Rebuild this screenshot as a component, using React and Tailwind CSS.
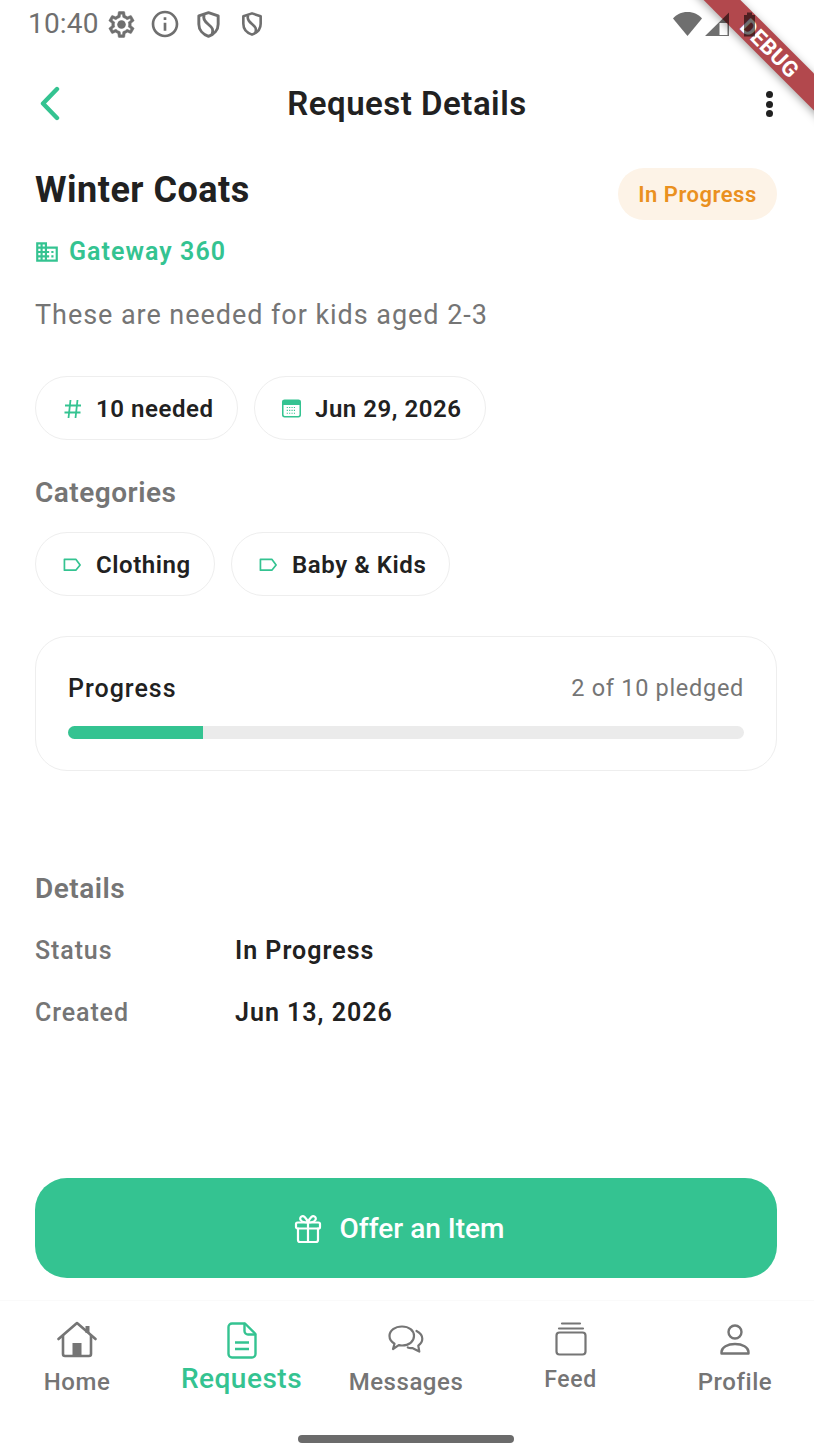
import React from "react";
import { MdInfoOutline, MdBusiness } from "react-icons/md";

const Gear = () => (
  <svg width="31" height="31" viewBox="0 0 24 24" fill="#6f6f6f" stroke="#6f6f6f" strokeWidth="0.4">
    <path d="M19.430 12.980c.04-.32.07-.64.07-.98 0-.34-.03-.66-.07-.98l2.110-1.650c.19-.15.24-.42.12-.64l-2-3.460c-.09-.16-.26-.25-.44-.25-.06 0-.12.01-.17.03l-2.490 1c-.52-.4-1.080-.73-1.690-.98l-.38-2.650C14.460 2.180 14.250 2 14 2h-4c-.25 0-.46.18-.49.42l-.38 2.650c-.61.25-1.170.59-1.690.98l-2.490-1c-.06-.02-.12-.03-.18-.03-.17 0-.34.09-.43.25l-2 3.460c-.13.22-.07.49.12.64l2.110 1.650c-.04.32-.07.65-.07.98 0 .33.03.66.07.98l-2.110 1.650c-.19.15-.24.42-.12.64l2 3.460c.09.16.26.25.44.25.06 0 .12-.01.17-.03l2.490-1c.52.4 1.080.73 1.690.98l.38 2.650c.03.24.24.42.49.42h4c.25 0 .46-.18.49-.42l.38-2.650c.61-.25 1.170-.59 1.690-.98l2.490 1c.06.02.12.03.18.03.17 0 .34-.09.43-.25l2-3.460c.12-.22.07-.49-.12-.64l-2.110-1.650zm-1.980-1.710c.04.31.05.52.05.73 0 .21-.02.43-.05.73l-.14 1.130.89.7 1.080.84-.7 1.210-1.270-.51-1.040-.42-.9.68c-.43.32-.84.56-1.250.73l-1.060.43-.16 1.130-.2 1.350h-1.400l-.19-1.350-.16-1.130-1.060-.43c-.43-.18-.83-.41-1.230-.71l-.91-.7-1.060.43-1.270.51-.7-1.210 1.080-.84.89-.7-.14-1.130c-.03-.31-.05-.54-.05-.74s.02-.43.05-.73l.14-1.130-.89-.7-1.080-.84.7-1.210 1.270.51 1.040.42.9-.68c.43-.32.84-.56 1.250-.73l1.060-.43.16-1.130.2-1.350h1.390l.19 1.350.16 1.130 1.060.43c.43.18.83.41 1.230.71l.91.7 1.060-.43 1.270-.51.7 1.210-1.070.85-.89.7.14 1.130z" />
    <circle cx="12" cy="12" r="3.300" stroke="none" />
  </svg>
);

const Shield = ({ s }) => (
  <svg width={s} height={s} viewBox="0 0 24 24" fill="none" stroke="#6f6f6f" strokeWidth="2.4" strokeLinejoin="round">
    <path d="M12 2.200 4 4.800v7c0 4.600 3.300 8.400 8 10 4.700-1.600 8-5.400 8-10v-7L12 2.200Z" />
    <path d="M8.500 4c-1.500 3 .5 5.500 3.500 8s4.500 4 3 8.500" strokeWidth="2.400" />
  </svg>
);

const Chip = ({ icon, children, w }) => (
  <div className={`h-[64px] pt-[1px] rounded-full border border-[#eeeeee] flex items-center pl-[27px] ${w}`}>
    <span className="w-[19px] flex justify-center shrink-0">{icon}</span>
    <span className="ml-[14px] text-[24px] font-semibold text-[#212121] tracking-[0.55px] whitespace-nowrap">{children}</span>
  </div>
);

const Tag = () => (
  <svg width="20" height="16" viewBox="0 0 20 16" fill="none" stroke="#34c391" strokeWidth="1.8" strokeLinejoin="round">
    <path d="M1.500 2h12l4.500 6-4.500 5.500h-12Z" />
  </svg>
);

const Nav = ({ icon, label, active, top, labelTop, small }) => (
  <div className="w-[120px] flex flex-col items-center">
    <div className={`h-[38px] flex items-center justify-center ${top}`}>{icon}</div>
    <span className={`${labelTop} whitespace-nowrap font-medium ${active ? "text-[28px] leading-[32px] text-[#34c391] tracking-[0.5px]" : small ? "text-[23px] leading-[28px] text-[#757575] tracking-[0.6px]" : "text-[24px] leading-[30px] text-[#757575] tracking-[0.55px]"}`}>{label}</span>
  </div>
);

export default function App() {
  return (
    <div className="relative w-[814px] h-[1455px] bg-white overflow-hidden" style={{ fontFamily: "Roboto, sans-serif" }}>
      {/* status bar */}
      <div className="relative z-20 h-[48px] flex items-center pl-[28px] pr-[54px] text-[#6f6f6f]">
        <span className="text-[28px] leading-[48px] w-[78px] tracking-[0.2px]">10:40</span>
        <Gear />
        <MdInfoOutline size={32} color="#6f6f6f" className="ml-[12px]" />
        <span className="ml-[13px]"><Shield s={29} /></span>
        <span className="ml-[16px]"><Shield s={26} /></span>
        <div className="flex-1" />
        <svg width="88" height="26" viewBox="0 0 88 26" fill="#000" fillOpacity="0.565">
          <path d="M1 7.500C4.500 3.500 9 1 15.500 1S26.500 3.500 30 7.500L15.500 25Z" />
          <path fillRule="evenodd" d="M33 25 57 1.500V25ZM47.500 12v12h8V12Z" />
          <path d="M72 4h3V1.500h5V4h3v21.500H72Z" />
        </svg>
      </div>

      {/* app bar */}
      <div className="h-[112px] relative flex items-center justify-center pb-[1px]">
        <svg className="absolute left-[35px] top-[37px]" width="30" height="36" viewBox="0 0 30 36" fill="none" stroke="#34c391" strokeWidth="4.400" strokeLinecap="round" strokeLinejoin="round">
          <path d="M22 4 8 18.500 22 33" />
        </svg>
        <span className="text-[33px] font-semibold text-[#212121] tracking-[0.5px]">Request Details</span>
        <div className="absolute left-[766px] top-[43px] flex flex-col gap-[2.500px]">
          <span className="w-[7px] h-[7px] rounded-full bg-[#212121]" />
          <span className="w-[7px] h-[7px] rounded-full bg-[#212121]" />
          <span className="w-[7px] h-[7px] rounded-full bg-[#212121]" />
        </div>
      </div>

      {/* body */}
      <div className="pl-[35px] pr-[37px]">
        <div className="flex justify-between items-start">
          <h1 className="text-[36px] leading-[58px] mt-[1px] font-bold text-[#212121] tracking-[0.5px]">Winter Coats</h1>
          <div className="mt-[8px] w-[159px] h-[52px] rounded-full bg-[#fdf3e7] flex items-center justify-center text-[22px] font-semibold text-[#ea9020] tracking-[0.5px]">In Progress</div>
        </div>
        <div className="mt-[14px] h-[36px] flex items-center">
          <MdBusiness size={26} color="#34c391" className="-ml-[1px]" />
          <span className="ml-[9px] text-[25px] font-semibold text-[#34c391] tracking-[1.05px]">Gateway 360</span>
        </div>
        <p className="mt-[26px] h-[38px] leading-[38px] text-[27px] text-[#757575] tracking-[0.95px]">These are needed for kids aged 2-3</p>

        <div className="mt-[42px] flex gap-[16px]">
          <Chip w="w-[203px]" icon={
            <svg width="18" height="20" viewBox="0 0 18 20" fill="none" stroke="#34c391" strokeWidth="1.800">
              <path d="M6.500 1 4.500 19M13.500 1l-2 18M1 6.500h16M0.500 13.500h16" />
            </svg>
          }>10 needed</Chip>
          <Chip w="w-[232px]" icon={
            <svg width="20" height="19" viewBox="0 0 20 19">
              <rect x="0.800" y="0.800" width="18.400" height="17.400" rx="2" fill="#fff" stroke="#34c391" strokeWidth="1.600" />
              <rect x="0.800" y="0.800" width="18.400" height="5" fill="#34c391" />
              <path d="M5 8.500h10M5 11.500h10M5 14.500h10" stroke="#34c391" strokeWidth="1.200" strokeDasharray="1.200 1.300" />
            </svg>
          }>Jun 29, 2026</Chip>
        </div>

        <h2 className="mt-[35px] h-[36px] leading-[36px] text-[28px] font-semibold text-[#757575] tracking-[0.5px]">Categories</h2>
        <div className="mt-[21px] flex gap-[16px]">
          <Chip w="w-[180px]" icon={<Tag />}>Clothing</Chip>
          <Chip w="w-[219px]" icon={<Tag />}>Baby &amp; Kids</Chip>
        </div>

        <div className="mt-[40px] h-[135px] rounded-[32px] border border-[#eeeeee] px-[32px] pt-[34px]">
          <div className="flex justify-between items-center h-[36px]">
            <span className="text-[25px] font-medium text-[#212121] tracking-[1px]">Progress</span>
            <span className="text-[23.500px] text-[#757575] tracking-[0.7px]">2 of 10 pledged</span>
          </div>
          <div className="mt-[19px] h-[13px] rounded-full bg-[#ebebeb] overflow-hidden">
            <div className="h-full w-[20%] bg-[#34c391]" />
          </div>
        </div>

        <h2 className="mt-[100px] h-[36px] leading-[36px] text-[28px] font-semibold text-[#757575] tracking-[0.5px]">Details</h2>
        <div className="mt-[26px] h-[36px] flex items-center">
          <span className="w-[200px] text-[25px] font-medium text-[#757575] tracking-[0.9px]">Status</span>
          <span className="text-[25px] font-semibold text-[#212121] tracking-[1px]">In Progress</span>
        </div>
        <div className="mt-[26px] h-[36px] flex items-center">
          <span className="w-[200px] text-[25px] font-medium text-[#757575] tracking-[0.9px]">Created</span>
          <span className="text-[25px] font-semibold text-[#212121] tracking-[1px]">Jun 13, 2026</span>
        </div>

        <button className="mt-[147px] w-[742px] h-[100px] pr-[14px] pt-[1px] rounded-[32px] bg-[#34c391] flex items-center justify-center text-white">
          <svg width="28" height="30" viewBox="0 0 28 30" fill="none" stroke="#fff" strokeWidth="2.200" strokeLinecap="round" strokeLinejoin="round">
            <rect x="2" y="8.500" width="24" height="6" rx="1.500" />
            <path d="M4 14.500v11.500a2 2 0 0 0 2 2h16a2 2 0 0 0 2-2V14.500M14 8.500V28M14 8.500C12 3 9.500 1.500 7.500 2.500 5 3.800 5.500 8.500 14 8.500ZM14 8.500C16 3 18.500 1.500 20.500 2.500 23 3.800 22.500 8.500 14 8.500Z" />
          </svg>
          <span className="ml-[18px] text-[28px] font-medium">Offer an Item</span>
        </button>
      </div>

      {/* bottom nav */}
      <div className="absolute left-0 right-0 top-[1300px] h-[155px] border-t border-[#fafafa] flex justify-between pl-[17px] pr-[19px]">
        <Nav top="mt-[19px]" labelTop="mt-[9px]" label="Home" icon={
          <svg width="40" height="37" viewBox="0 0 40 37" fill="none" stroke="#757575" strokeWidth="2.600" strokeLinejoin="round" strokeLinecap="round">
            <path d="M1.500 18 20 2 38.500 18" />
            <path d="M6 14.500V33a2 2 0 0 0 2 2h24a2 2 0 0 0 2-2V14.500" />
            <path d="M30.500 5v7" strokeWidth="4" strokeLinecap="butt" />
            <rect x="15.500" y="22" width="9" height="13" fill="#757575" stroke="none" />
          </svg>
        } />
        <Nav active top="mt-[20px]" labelTop="mt-[4px]" label="Requests" icon={
          <svg width="30" height="37" viewBox="0 0 30 37" fill="none" stroke="#34c391" strokeWidth="2.400" strokeLinejoin="round" strokeLinecap="round">
            <path d="M5 1.500h13L28.500 12v20a3.500 3.500 0 0 1-3.500 3.500H5A3.500 3.500 0 0 1 1.500 32V5A3.500 3.500 0 0 1 5 1.500Z" />
            <path d="M17.500 2v7a3.500 3.500 0 0 0 3.500 3.500h7" />
            <path d="M8 20.500h14M8 27h14" strokeLinecap="butt" />
          </svg>
        } />
        <Nav top="mt-[20px]" labelTop="mt-[8px]" label="Messages" icon={
          <svg width="36" height="30" viewBox="0 0 36 30" fill="none" stroke="#757575" strokeWidth="2.200" strokeLinejoin="round" strokeLinecap="round">
            <path d="M14 1.500c7 0 12 4 12 9.500s-5 9.500-12 9.500c-1.200 0-2.200-.1-3.200-.3L5 24l1.500-5.300C3.400 16.800 1.500 14 1.500 11c0-5.500 5.500-9.500 12.500-9.500Z" />
            <path d="M28.500 6c3.600 1.800 5.800 4.500 5.800 7.800 0 2.700-1.500 5-4 6.800l1 6-7-3.600c-1 .2-3 .1-4.500-.5" />
          </svg>
        } />
        <Nav small top="mt-[19px]" labelTop="mt-[8px]" label="Feed" icon={
          <svg width="32" height="34" viewBox="0 0 32 34" fill="none" stroke="#757575" strokeWidth="2.200" strokeLinecap="round">
            <path d="M7 1.500h18M4 6.500h24" />
            <rect x="1.500" y="10.500" width="29" height="22" rx="3" />
          </svg>
        } />
        <Nav top="mt-[19px]" labelTop="mt-[9px]" label="Profile" icon={
          <svg width="30" height="32" viewBox="0 0 30 32" fill="none" stroke="#757575" strokeWidth="2.400" strokeLinejoin="round">
            <circle cx="15" cy="9" r="6.500" />
            <path d="M1.500 30.500v-1.500c0-4.500 6-8 13.500-8s13.500 3.500 13.500 8v1.500Z" />
          </svg>
        } />
        <div className="absolute left-[298px] top-[134px] w-[216px] h-[8px] rounded-full bg-[#6b6b6b]" />
      </div>

      {/* debug ribbon */}
      <div className="absolute z-10 top-0 right-0 w-[143px] h-[143px] overflow-hidden pointer-events-none">
        <div className="absolute left-[-44px] top-[35px] w-[286px] h-[26px] rotate-45 bg-[#b2484d] shadow-[0_2px_8px_rgba(0,0,0,0.35)] flex items-center justify-center text-white text-[22px] font-bold tracking-[0.5px]">DEBUG</div>
      </div>
    </div>
  );
}
